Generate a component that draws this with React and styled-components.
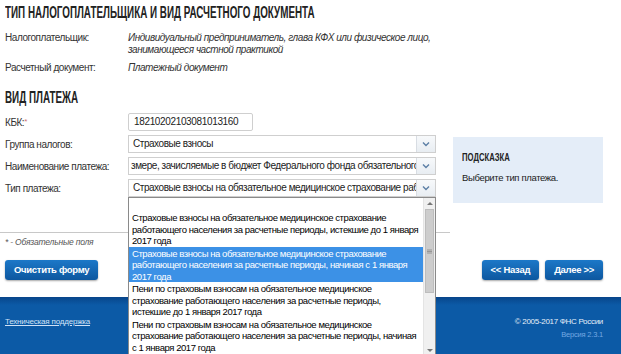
import styled, { createGlobalStyle } from "styled-components";

const GlobalStyle = createGlobalStyle`
    body {
        margin: 0;
        font-family: "Liberation Sans", Arial, sans-serif;
        font-size: 10px;
        letter-spacing: -0.45px;
        color: #333;
        background: #fff;
    }
`

const Page = styled.div`
    width: 621px;
    height: 354px;
    display: flex;
    flex-direction: column;
    overflow: hidden;
`

const Main = styled.div`
    padding: 3px 18px 0 5px;
    height: 297px;
    box-sizing: border-box;
`

const SectionTitle = styled.h2`
    margin: ${p => p.$top || 0}px 0 0 0;
    font-family: "Liberation Sans", Arial, sans-serif;
    font-weight: bold;
    font-size: 16px;
    letter-spacing: 0;
    line-height: 20px;
    color: #222;
    text-transform: uppercase;
    white-space: nowrap;
    > span {
        display: inline-block;
        transform: scaleX(0.615);
        transform-origin: left center;
    }
`

const InfoRow = styled.div`
    display: grid;
    grid-template-columns: 123px 1fr;
    line-height: 12px;
    margin-top: ${p => p.$top || 0}px;
`

const InfoValue = styled.div`
    font-style: italic;
    font-size: 10px;
    letter-spacing: -0.45px;
    color: #333;
`

const FormArea = styled.div`
    display: flex;
    align-items: flex-start;
    margin-top: 5px;
`

const Fields = styled.div`
    display: flex;
    flex-direction: column;
    gap: 4px;
    width: 431px;
`

const FieldRow = styled.div`
    display: grid;
    grid-template-columns: 123px 308px;
    align-items: center;
    height: 18px;
`

const Label = styled.div`
    color: #333;
`

const Star = styled.span`
    color: #d07070;
    font-size: 8px;
    vertical-align: top;
`

const TextInput = styled.div`
    width: 125px;
    height: 18px;
    box-sizing: border-box;
    border: 1px solid #cfcfcf;
    border-radius: 2px;
    padding: 0 0 0 5px;
    line-height: 16px;
    letter-spacing: -0.35px;
    color: #222;
    background: #fff;
`

const SelectBox = styled.div`
    position: relative;
    height: 18px;
    box-sizing: border-box;
    border: 1px solid #cfcfcf;
    background: #fff;
    display: flex;
    align-items: center;
`

const SelectText = styled.div`
    flex: 1;
    padding-left: ${p => p.$scrolled ? 2 : 4}px;
    white-space: nowrap;
    overflow: hidden;
    color: #222;
    line-height: 16px;
`

const ArrowButton = styled.div`
    width: 18px;
    height: 16px;
    border-left: 1px solid #d8dde3;
    background: linear-gradient(#f7f9fb, #e8edf2);
    display: flex;
    align-items: center;
    justify-content: center;
`

const DropList = styled.div`
    position: absolute;
    top: 17px;
    left: -1px;
    width: 308px;
    height: 160px;
    box-sizing: border-box;
    border: 1px solid #8a8a8a;
    background: #fff;
    display: flex;
    z-index: 5;
`

const Options = styled.div`
    flex: 1;
    padding-top: 13px;
`

const Option = styled.div`
    padding: 1px 3px 0 3px;
    font-size: 9.5px;
    letter-spacing: -0.43px;
    line-height: 11.5px;
    color: ${p => p.$active ? "#fff" : "#000"};
    background: ${p => p.$active ? "#3c91e6" : "transparent"};
`

const ScrollBar = styled.div`
    width: 11px;
    border-left: 1px solid #e4e4e4;
    background: #f0f0f0;
    display: flex;
    flex-direction: column;
`

const ScrollArrow = styled.div`
    height: 10px;
    display: flex;
    align-items: center;
    justify-content: center;
`

const ScrollThumb = styled.div`
    margin: 1px 1px 0 1px;
    height: 84px;
    background: #cdcdcd;
    border: 1px solid #bdbdbd;
    box-sizing: border-box;
    display: flex;
    align-items: center;
    justify-content: center;
`

const ScrollTrack = styled.div`
    flex: 1;
`

const Hint = styled.div`
    margin: 24px 0 0 17px;
    width: 150px;
    height: 66px;
    box-sizing: border-box;
    background: #e4edf8;
    padding: 13px 9px;
`

const HintTitle = styled.div`
    font-weight: bold;
    font-size: 11px;
    letter-spacing: 0;
    color: #222;
    line-height: 14px;
    white-space: nowrap;
    > span {
        display: inline-block;
        transform: scaleX(0.7);
        transform-origin: left center;
    }
`

const HintText = styled.div`
    margin-top: 8px;
    font-size: 9.5px;
    letter-spacing: -0.35px;
    color: #222;
`

const Separator = styled.div`
    margin: 29px 0 0 -5px;
    width: 450px;
    height: 1px;
    background: #c8c8c8;
`

const Required = styled.div`
    margin-top: 4px;
    font-size: 8.5px;
    font-style: italic;
    letter-spacing: -0.2px;
    color: #555;
`

const ButtonBar = styled.div`
    display: flex;
    justify-content: space-between;
    margin-top: 13px;
`

const ButtonGroup = styled.div`
    display: flex;
    gap: 6px;
`

const Button = styled.div`
    height: 20px;
    padding: 0 ${p => p.$pad || 9}px;
    border-radius: 3px;
    background: linear-gradient(#1c78c8, #0d579f);
    box-shadow: 0 1px 2px rgba(0,0,0,0.35);
    color: #fff;
    font-weight: bold;
    font-size: 9.5px;
    letter-spacing: -0.3px;
    line-height: 20px;
`

const Footer = styled.div`
    flex: 1;
    background: linear-gradient(#08458a, #0c5aa6 8px);
    display: flex;
    justify-content: space-between;
    align-items: flex-start;
    padding: 19px 18px 0 5px;
`

const SupportLink = styled.a`
    margin-top: 1px;
    color: #cfe1f6;
    font-size: 8px;
    letter-spacing: -0.2px;
    text-decoration: underline;
`

const Copy = styled.div`
    text-align: right;
    font-size: 8px;
    letter-spacing: -0.3px;
    color: #e6eef8;
    line-height: 11px;
`

const Version = styled.div`
    margin-top: 2px;
    font-size: 7.5px;
    letter-spacing: -0.2px;
    color: #74a8e2;
`

const Chevron = () => (
    <svg width="8" height="6" viewBox="0 0 8 6">
        <path d="M1 1.5 L4 4.5 L7 1.5" fill="none" stroke="#5c7fa6" strokeWidth="1.4" />
    </svg>
)

const options = [
    { text: "Страховые взносы на обязательное медицинское страхование работающего населения за расчетные периоды, истекшие до 1 января 2017 года" },
    { text: "Страховые взносы на обязательное медицинское страхование работающего населения за расчетные периоды, начиная с 1 января 2017 года", active: true },
    { text: "Пени по страховым взносам на обязательное медицинское страхование работающего населения за расчетные периоды, истекшие до 1 января 2017 года" },
    { text: "Пени по страховым взносам на обязательное медицинское страхование работающего населения за расчетные периоды, начиная с 1 января 2017 года" },
]

const App = () => {
    return (
        <Page>
            <GlobalStyle />
            <Main>
                <SectionTitle><span>Тип налогоплательщика и вид расчетного документа</span></SectionTitle>
                <InfoRow $top={9}>
                    <div>Налогоплательщик:</div>
                    <InfoValue>Индивидуальный предприниматель, глава КФХ или физическое лицо,<br />занимающееся частной практикой</InfoValue>
                </InfoRow>
                <InfoRow $top={6}>
                    <div>Расчетный документ:</div>
                    <InfoValue>Платежный документ</InfoValue>
                </InfoRow>
                <SectionTitle $top={14}><span>Вид платежа</span></SectionTitle>
                <FormArea>
                    <Fields>
                        <FieldRow>
                            <Label>КБК:<Star>*</Star></Label>
                            <TextInput>18210202103081013160</TextInput>
                        </FieldRow>
                        <FieldRow>
                            <Label>Группа налогов:</Label>
                            <SelectBox>
                                <SelectText>Страховые взносы</SelectText>
                                <ArrowButton><Chevron /></ArrowButton>
                            </SelectBox>
                        </FieldRow>
                        <FieldRow>
                            <Label>Наименование платежа:</Label>
                            <SelectBox>
                                <SelectText $scrolled>змере, зачисляемые в бюджет Федерального фонда обязательного медицинского страхования</SelectText>
                                <ArrowButton><Chevron /></ArrowButton>
                            </SelectBox>
                        </FieldRow>
                        <FieldRow>
                            <Label>Тип платежа:</Label>
                            <SelectBox>
                                <SelectText>Страховые взносы на обязательное медицинское страхование работающего населения</SelectText>
                                <ArrowButton><Chevron /></ArrowButton>
                                <DropList>
                                    <Options>
                                        {options.map((o, i) => (
                                            <Option key={i} $active={o.active}>{o.text}</Option>
                                        ))}
                                    </Options>
                                    <ScrollBar>
                                        <ScrollArrow>
                                            <svg width="6" height="4" viewBox="0 0 6 4"><path d="M0 4 L3 1 L6 4 Z" fill="#777" /></svg>
                                        </ScrollArrow>
                                        <ScrollThumb>
                                            <svg width="5" height="5" viewBox="0 0 5 5"><path d="M0 1h5M0 2.5h5M0 4h5" stroke="#888" strokeWidth="0.8" /></svg>
                                        </ScrollThumb>
                                        <ScrollTrack />
                                        <ScrollArrow>
                                            <svg width="6" height="4" viewBox="0 0 6 4"><path d="M0 0 L3 3 L6 0 Z" fill="#777" /></svg>
                                        </ScrollArrow>
                                    </ScrollBar>
                                </DropList>
                            </SelectBox>
                        </FieldRow>
                    </Fields>
                    <Hint>
                        <HintTitle><span>ПОДСКАЗКА</span></HintTitle>
                        <HintText>Выберите тип платежа.</HintText>
                    </Hint>
                </FormArea>
                <Separator />
                <Required>* - Обязательные поля</Required>
                <ButtonBar>
                    <Button $pad={9}>Очистить форму</Button>
                    <ButtonGroup>
                        <Button $pad={9}>&lt;&lt; Назад</Button>
                        <Button $pad={9}>Далее &gt;&gt;</Button>
                    </ButtonGroup>
                </ButtonBar>
            </Main>
            <Footer>
                <SupportLink>Техническая поддержка</SupportLink>
                <Copy>
                    <div>© 2005-2017 ФНС России</div>
                    <Version>Версия 2.3.1</Version>
                </Copy>
            </Footer>
        </Page>
    )
}

export default App;
